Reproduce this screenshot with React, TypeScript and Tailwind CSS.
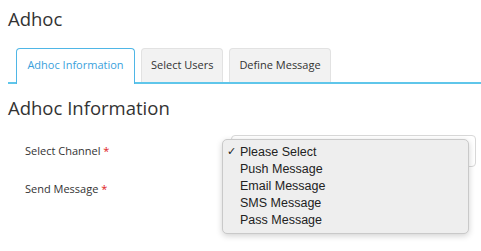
import React from 'react';

const tabs = ['Adhoc Information', 'Select Users', 'Define Message'];
const options = ['Please Select', 'Push Message', 'Email Message', 'SMS Message', 'Pass Message'];

export default function App() {
  return (
    <div className="w-[481px] h-[251px] overflow-hidden bg-white pl-2 font-['Open_Sans',sans-serif] text-[#333]">
      <h1 className="pt-[5px] text-[18.5px] leading-[28px]">Adhoc</h1>

      {/* tabs */}
      <div className="mt-[15px] flex items-end gap-[6px] border-b-2 border-[#5fc6ea] pl-2">
        {tabs.map((t, i) =>
          i === 0 ? (
            <div
              key={t}
              className="-mb-[2px] flex h-[36px] w-[119px] items-center justify-center rounded-t-[4px] border border-b-0 border-[#4fb6e6] bg-white pb-[2px] text-[11px] text-[#3a9fdc]"
            >
              {t}
            </div>
          ) : (
            <div
              key={t}
              className="flex h-[34px] items-center rounded-t-[4px] border border-b-0 border-[#e2e2e2] bg-[#f2f2f2] px-[9px] text-[11px] text-[#333]"
            >
              {t}
            </div>
          )
        )}
      </div>

      <h2 className="mt-[10px] text-[18.5px] leading-[28px]">Adhoc Information</h2>

      {/* form */}
      <div className="mt-[13px] flex flex-col gap-[6px] pl-[17px]">
        <div className="flex h-[32px] items-center">
          <div className="w-[206px] text-[11px] leading-[16px]">
            Select Channel <span className="text-[#e02020]">*</span>
          </div>
          <div className="relative h-[32px] w-[245px] rounded-[4px] border border-[#d8d8d8] bg-white">
            <div className="absolute left-[-10px] top-[3px] h-[95px] w-[247px] rounded-[5px] border border-[#c9c9c9] bg-[#eeeeee] pt-[4px] font-['Liberation_Sans',sans-serif] text-[12.5px] text-[#222] shadow-[0_2px_6px_rgba(0,0,0,0.18)]">
              {options.map((o, i) => (
                <div key={o} className="flex h-[17px] items-center">
                  <span className="w-[17px] pl-[4px] font-['DejaVu_Sans',sans-serif] text-[11px]">{i === 0 ? '✓' : ''}</span>
                  <span>{o}</span>
                </div>
              ))}
            </div>
          </div>
        </div>
        <div className="flex h-[32px] items-center">
          <div className="w-[206px] text-[11px] leading-[16px]">
            Send Message <span className="text-[#e02020]">*</span>
          </div>
        </div>
      </div>
    </div>
  );
}
